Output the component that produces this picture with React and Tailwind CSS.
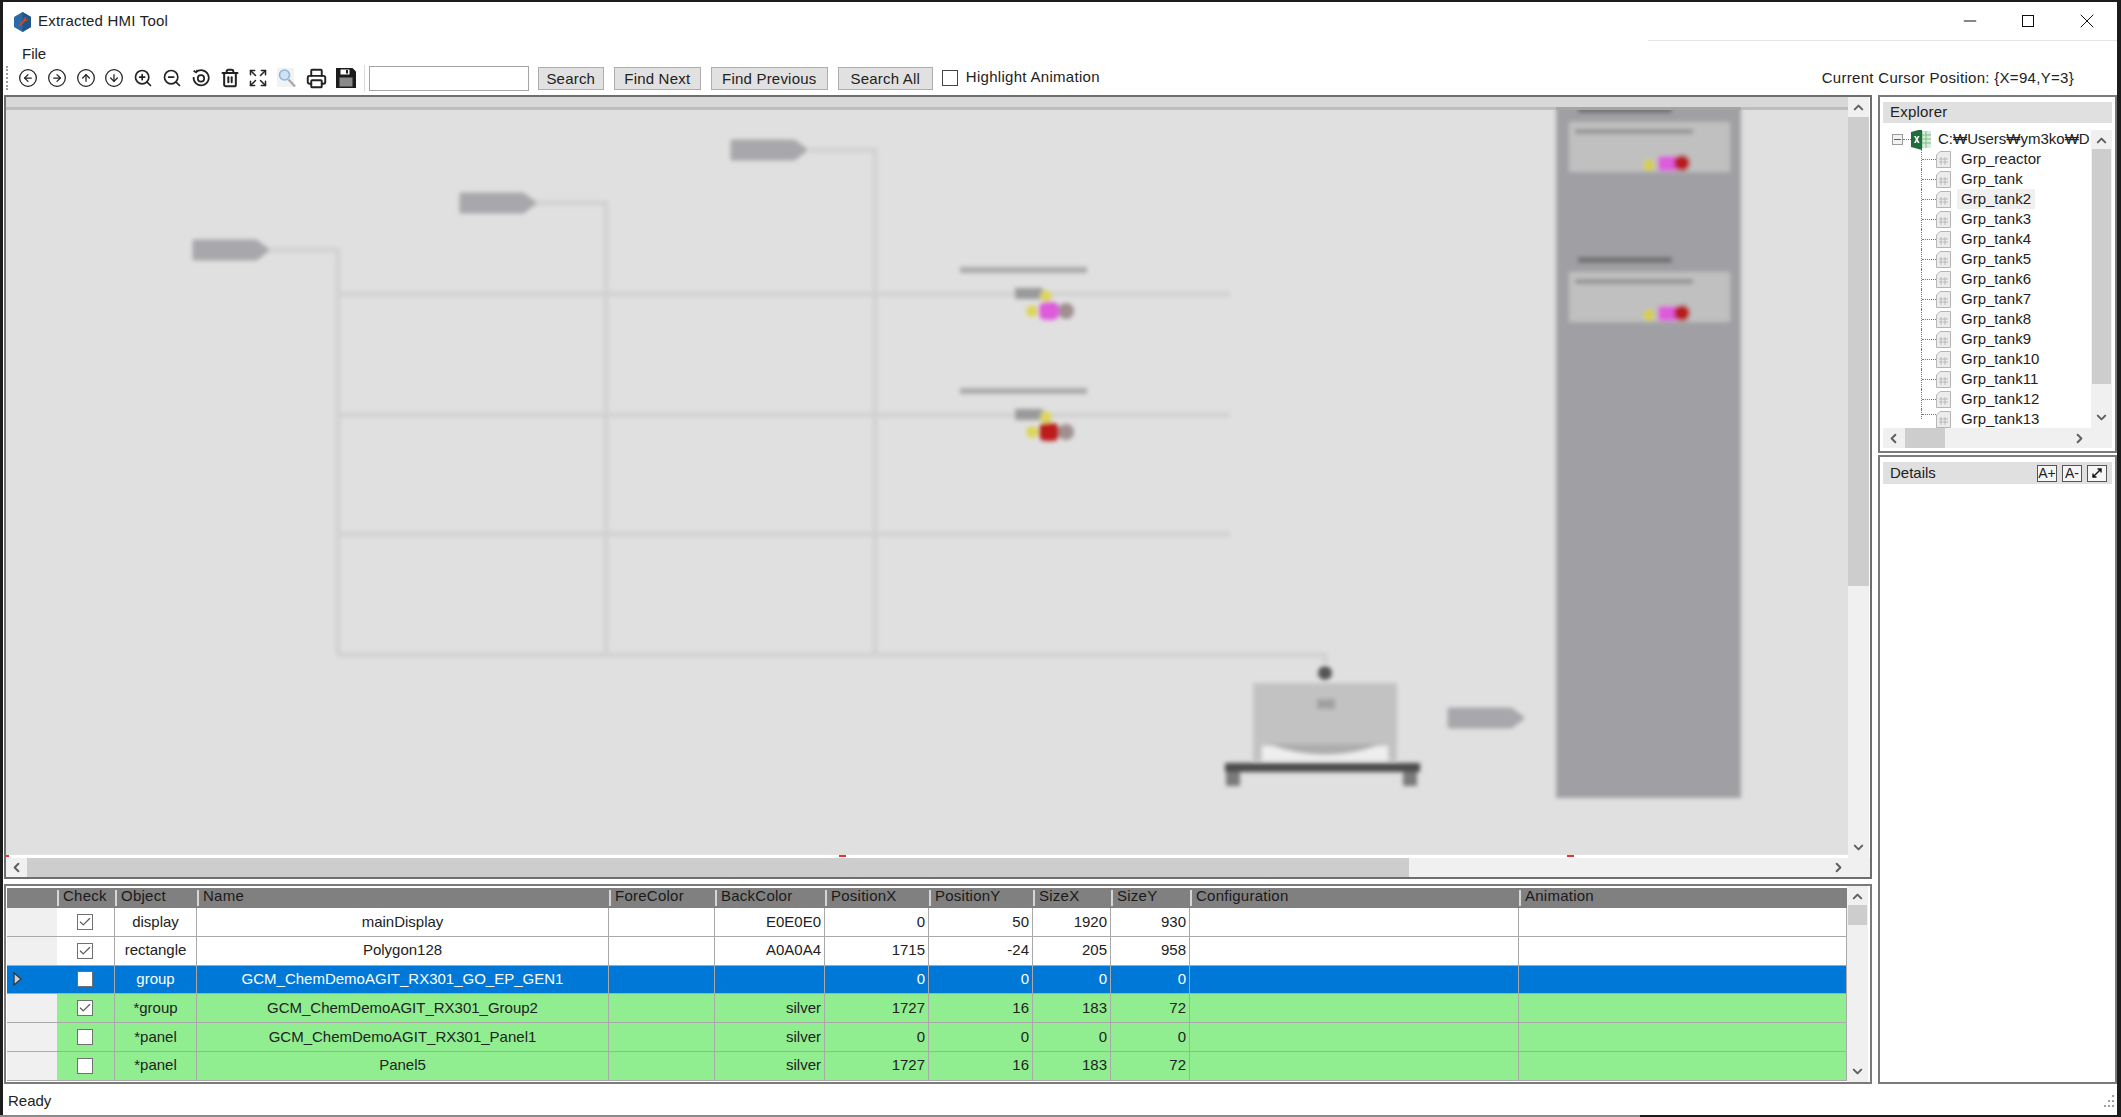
import {
  Check,
  ChevronDown,
  ChevronLeft,
  ChevronRight,
  ChevronUp,
  CircleArrowDown,
  CircleArrowLeft,
  CircleArrowRight,
  CircleArrowUp,
  Expand,
  Minus,
  Printer,
  Trash2,
  X,
  ZoomIn,
  ZoomOut,
} from "lucide-react"

const gridCols = "grid grid-cols-[50px_58px_82px_412px_106px_110px_104px_104px_78px_79px_329px_328px]"

const headers = ["Check", "Object", "Name", "ForeColor", "BackColor", "PositionX", "PositionY", "SizeX", "SizeY", "Configuration", "Animation"]

const rows = [
  { checked: true, object: "display", name: "mainDisplay", back: "E0E0E0", px: "0", py: "50", sx: "1920", sy: "930", tone: "white" },
  { checked: true, object: "rectangle", name: "Polygon128", back: "A0A0A4", px: "1715", py: "-24", sx: "205", sy: "958", tone: "white" },
  { checked: false, object: "group", name: "GCM_ChemDemoAGIT_RX301_GO_EP_GEN1", back: "", px: "0", py: "0", sx: "0", sy: "0", tone: "selected" },
  { checked: true, object: "*group", name: "GCM_ChemDemoAGIT_RX301_Group2", back: "silver", px: "1727", py: "16", sx: "183", sy: "72", tone: "green" },
  { checked: false, object: "*panel", name: "GCM_ChemDemoAGIT_RX301_Panel1", back: "silver", px: "0", py: "0", sx: "0", sy: "0", tone: "green" },
  { checked: false, object: "*panel", name: "Panel5", back: "silver", px: "1727", py: "16", sx: "183", sy: "72", tone: "green" },
]

const treeItems = ["Grp_reactor", "Grp_tank", "Grp_tank2", "Grp_tank3", "Grp_tank4", "Grp_tank5", "Grp_tank6", "Grp_tank7", "Grp_tank8", "Grp_tank9", "Grp_tank10", "Grp_tank11", "Grp_tank12", "Grp_tank13"]

function AppIcon() {
  return (
    <svg width="19" height="20" viewBox="0 0 19 20">
      <path d="M9.5 0 18 5v10l-8.5 5L1 15V5z" fill="#2a6aa6" />
      <path d="M9.5 0 18 5v10l-8.5 5z" fill="#1f5688" />
      <path d="M13 5c-1.6 0-2.6 1.2-2.4 2.8L5.5 13l1.4 1.4 5.2-5.1C13.7 9.5 15 8.4 15 6.8l-1.7 1-1-1 1.7-1z" fill="#d8402f" />
    </svg>
  )
}

function ResetIcon() {
  return (
    <svg width="20" height="20" viewBox="0 0 20 20" fill="none" stroke="#222" strokeWidth="1.7">
      <path d="M5 4.2A7.6 7.6 0 1 1 2.6 9" />
      <path d="M2.6 2.8 5 4.4 6.5 2" />
      <circle cx="10" cy="10.4" r="3.2" />
    </svg>
  )
}

function FadedSearchIcon() {
  return (
    <svg width="20" height="22" viewBox="0 0 20 22" fill="none">
      <rect x="0" y="1" width="17" height="19" fill="#f2f2f2" />
      <circle cx="7.5" cy="8" r="5" fill="#cfe3f5" stroke="#8cb8dc" strokeWidth="1.6" />
      <path d="M11.5 12.5 18 19.5" stroke="#a9a9a9" strokeWidth="2.4" />
    </svg>
  )
}

function SaveIcon() {
  return (
    <svg width="20" height="20" viewBox="0 0 20 20">
      <path d="M0 0h16.500L20 3.500V20H0z" fill="#1c1c1c" />
      <rect x="4.500" y="1.500" width="9" height="5" fill="#fff" />
      <rect x="10" y="2" width="2" height="3.500" fill="#1c1c1c" />
      <rect x="3.500" y="9.500" width="13" height="9" fill="#8a8a8a" />
    </svg>
  )
}

function ExcelIcon() {
  return (
    <svg width="21" height="21" viewBox="0 0 21 21" className="shrink-0">
      <rect x="8" y="2" width="12" height="17" fill="#d8ecd9" />
      <path d="M11 2v17M15 2v17M8 6h12M8 10h12M8 14h12" stroke="#7fbb8b" strokeWidth="1" />
      <path d="M0 3 11 0v21L0 18z" fill="#1e6e3c" />
      <path d="M3 7h1.800l1 2 1-2H8.600L6.700 10.500 8.600 14H6.800l-1-2-1 2H3l1.900-3.500z" fill="#fff" />
    </svg>
  )
}

function SheetIcon() {
  return (
    <svg width="15" height="17" viewBox="0 0 15 17" fill="none" className="shrink-0">
      <path d="M4 .5h10.500v16H.5V4z" fill="#ececec" stroke="#b5b5b5" />
      <path d="M5 6v8M9 6v8M3 8h9M3 11h9" stroke="#b0b0b0" strokeWidth=".8" />
    </svg>
  )
}

function Diagram() {
  const tags = [
    [192, 250],
    [459, 203],
    [730, 150],
    [1447, 718],
  ]
  const lines = [
    "M270 250H338V655",
    "M536 203H606V655",
    "M809 150H875V655",
    "M338 294H1230",
    "M338 415H1230",
    "M338 534H1230",
    "M338 655H1325V664",
  ]
  const gauges = [
    [293, "#de5bdc"],
    [414, "#bd1d1d"],
  ]
  const panels = [122, 272]

  return (
    <svg width="1842" height="761" viewBox="6 97 1842 761" className="block">
      <defs>
        <filter id="soft" x="-5%" y="-5%" width="110%" height="110%">
          <feGaussianBlur stdDeviation="2.3" />
        </filter>
      </defs>
      <rect x="6" y="97" width="1842" height="761" fill="#e0e0e0" />
      <g filter="url(#soft)">
        {lines.map((d) => (
          <path key={d} d={d} fill="none" stroke="#d2d2d2" strokeWidth="5" />
        ))}
        {tags.map(([x, y]) => (
          <path key={x} d={`M${x + 2} ${y - 9}h62l12 9-12 9h-62z`} fill="#a8a8ac" stroke="#a8a8ac" strokeWidth="3" strokeLinejoin="round" />
        ))}
        {gauges.map(([y, color]) => (
          <g key={y}>
            <rect x="960" y={y - 26} width="127" height="6" fill="#aaaaaa" />
            <rect x="1015" y={y - 5} width="28" height="11" fill="#9a9a9a" />
            <circle cx="1046" cy={y + 3} r="6" fill="#dcd65a" />
            <circle cx="1032" cy={y + 18} r="6" fill="#dcd65a" />
            <circle cx="1066" cy={y + 18} r="8" fill="#a08f8f" />
            <rect x="1039" y={y + 9} width="20" height="18" rx="6" fill={color} />
          </g>
        ))}
        <circle cx="1325" cy="673" r="7" fill="#555" />
        <rect x="1253" y="683" width="144" height="64" fill="#c2c2c2" />
        <rect x="1253" y="745" width="9" height="16" fill="#c2c2c2" />
        <rect x="1388" y="745" width="9" height="16" fill="#c2c2c2" />
        <path d="M1262 746H1388V760H1262z" fill="#eeeeee" />
        <path d="M1268 744Q1325 766 1382 744z" fill="#adadad" />
        <rect x="1317" y="699" width="18" height="10" fill="#a0a0a0" />
        <rect x="1225" y="763" width="195" height="9" fill="#4c4c4c" />
        <rect x="1226" y="772" width="14" height="14" fill="#7a7a7a" />
        <rect x="1403" y="772" width="14" height="14" fill="#7a7a7a" />
        <rect x="1556" y="104" width="185" height="694" fill="#a0a0a4" />
        <rect x="1578" y="107" width="94" height="6" fill="#6f6f71" />
        <rect x="1578" y="257" width="94" height="6" fill="#6f6f71" />
        {panels.map((y) => (
          <g key={y}>
            <rect x="1569" y={y} width="161" height="50" fill="#c0c0c0" />
            <rect x="1575" y={y + 7} width="118" height="5" fill="#959595" />
            <circle cx="1649" cy={y + 43} r="6" fill="#d6cf4e" />
            <rect x="1658" y={y + 34} width="20" height="15" rx="3" fill="#de5bdc" />
            <circle cx="1682" cy={y + 41} r="8" fill="#b81f1f" />
          </g>
        ))}
      </g>
      <rect x="6" y="97" width="1842" height="11" fill="#d8d8d8" />
      <rect x="6" y="107" width="1842" height="3" fill="#bdbdbd" />
      <rect x="1556" y="107" width="185" height="3" fill="#a5a5a5" />
      <rect x="6" y="855" width="1842" height="3" fill="#ffffff" />
      <rect x="6" y="855" width="3" height="2" fill="#f03030" />
      <rect x="839" y="855" width="7" height="2" fill="#f03030" />
      <rect x="1567" y="855" width="7" height="2" fill="#f03030" />
    </svg>
  )
}

function ToolButton({ width, children }) {
  return (
    <button className={`${width} h-[23px] shrink-0 border border-[#adadad] bg-[#e1e1e1] text-[15px] leading-none tracking-[0.2px] text-[#222]`}>
      {children}
    </button>
  )
}

function Toolbar() {
  return (
    <div className="flex h-[30px] items-center pb-[4px]">
      <div className="ml-[3px] h-[24px] w-[2px] border-l-2 border-dotted border-[#a0a0a0]" />
      <div className="ml-[10px] flex items-center gap-[8.800px] text-[#222]">
        <CircleArrowLeft size={20} strokeWidth={1.5} />
        <CircleArrowRight size={20} strokeWidth={1.5} />
        <CircleArrowUp size={20} strokeWidth={1.5} />
        <CircleArrowDown size={20} strokeWidth={1.5} />
        <ZoomIn size={20} strokeWidth={2} />
        <ZoomOut size={20} strokeWidth={2} />
        <ResetIcon />
        <Trash2 size={20} strokeWidth={2.400} />
        <Expand size={20} strokeWidth={1.8} />
        <FadedSearchIcon />
        <Printer size={21} strokeWidth={2.200} />
        <SaveIcon />
      </div>
      <div className="ml-[8px] h-[27px] w-px bg-[#dcdcdc]" />
      <div className="ml-[4px] h-[25px] w-[160px] border border-[#a5a5a5] bg-white" />
      <div className="ml-[9px] flex items-center gap-[10px]">
        <ToolButton width="w-[66px]">Search</ToolButton>
        <ToolButton width="w-[87px]">Find Next</ToolButton>
        <ToolButton width="w-[117px]">Find Previous</ToolButton>
        <ToolButton width="w-[95px]">Search All</ToolButton>
      </div>
      <div className="ml-[9px] h-[16px] w-[16px] border border-[#444] bg-white" />
      <span className="ml-[8px] -mt-[2px] text-[15px] tracking-[0.3px] text-[#222]">Highlight Animation</span>
      <span className="ml-auto pr-[43px] text-[15px] tracking-[0.3px] text-[#222]">Current Cursor Position: {"{X=94,Y=3}"}</span>
    </div>
  )
}

function VScroll({ thumb, track = "bg-[#f0f0f0]" }) {
  return (
    <div className={`flex w-[21px] shrink-0 flex-col items-center ${track}`}>
      <ChevronUp size={15} strokeWidth={3.200} className="mb-[1px] mt-[3px] shrink-0 text-[#606060]" />
      <div className="w-full flex-1">{thumb}</div>
      <ChevronDown size={15} strokeWidth={3.200} className="mb-[3px] mt-[1px] shrink-0 text-[#606060]" />
    </div>
  )
}

function CanvasPanel() {
  return (
    <div className="flex h-[784px] flex-col border-2 border-[#6e6e6e]">
      <div className="flex h-[761px]">
        <div className="h-[761px] w-[1842px]">
          <Diagram />
        </div>
        <VScroll thumb={<div className="mt-[1px] h-[469px] w-full bg-[#cdcdcd]" />} />
      </div>
      <div className="flex h-[19px] items-center bg-[#f0f0f0]">
        <ChevronLeft size={15} strokeWidth={3.200} className="ml-[3px] text-[#606060]" />
        <div className="ml-[3px] h-full w-[1382px] bg-[#cdcdcd]" />
        <ChevronRight size={15} strokeWidth={3.200} className="ml-auto mr-[24px] text-[#606060]" />
      </div>
    </div>
  )
}

function CheckBox({ checked }) {
  return (
    <div className="-ml-[2px] flex h-[16px] w-[16px] items-center justify-center border border-[#707070] bg-white">
      {checked && <Check size={14} strokeWidth={2} className="text-[#555]" />}
    </div>
  )
}

function Row({ row }) {
  const toneClass = {
    white: "bg-white text-[#222]",
    selected: "bg-[#0078d7] text-white",
    green: "bg-[#90ee90] text-[#222]",
  }[row.tone]
  const cell = "flex items-center border-r border-b border-[#a9a9a9]"
  const numbers = [row.back, row.px, row.py, row.sx, row.sy]

  return (
    <div className={`${gridCols} h-[28.750px] text-[15px] ${toneClass}`}>
      <div className={`flex items-center pl-[6px] ${row.tone === "selected" ? "border-b border-[#a9a9a9]" : "border-b border-[#a9a9a9] bg-[#f0f0f0]"}`}>
        {row.tone === "selected" && (
          <svg width="9" height="14" viewBox="0 0 9 14">
            <path d="M1 1 8 7 1 13z" fill="#c9d4df" stroke="#3a3a3a" strokeWidth="1.4" />
          </svg>
        )}
      </div>
      <div className={`${cell} justify-center`}>
        <CheckBox checked={row.checked} />
      </div>
      <div className={`${cell} justify-center`}>{row.object}</div>
      <div className={`${cell} justify-center`}>{row.name}</div>
      <div className={cell} />
      {numbers.map((value, i) => (
        <div key={i} className={`${cell} justify-end pr-[3px]`}>
          {value}
        </div>
      ))}
      <div className={cell} />
      <div className={cell} />
    </div>
  )
}

function DataGrid() {
  return (
    <div className="mt-[5px] flex h-[200px] border-2 border-[#7a7a7a] bg-white">
      <div className="w-[1841px] overflow-hidden pl-px pt-[2px]">
        <div className={`${gridCols} h-[20px] bg-[#808080] text-[15px] tracking-[0.25px] text-[#1a1a1a]`}>
          <div />
          {headers.map((title) => (
            <div key={title} className="flex items-center">
              <div className="h-[16px] w-[2px] bg-[#d6d6d6]" />
              <span className="-mt-[3px] ml-[4px]">{title}</span>
            </div>
          ))}
        </div>
        {rows.map((row) => (
          <Row key={row.name} row={row} />
        ))}
      </div>
      <VScroll thumb={<div className="mx-auto h-[20px] w-[19px] bg-[#cdcdcd]" />} />
    </div>
  )
}

function TreeRow({ label, highlighted, last }) {
  return (
    <div className="flex h-[20px] items-center">
      <div className={`flex w-[15px] shrink-0 items-center border-l border-dotted border-[#777] ${last ? "h-[10px] self-start" : "h-full"}`}>
        <div className="w-full border-b border-dotted border-[#777]" />
      </div>
      <SheetIcon />
      <span className={`ml-[6px] px-[4px] text-[15px] leading-[20px] text-[#222] ${highlighted ? "bg-[#f0f0f0]" : ""}`}>{label}</span>
    </div>
  )
}

function Explorer() {
  return (
    <div className="h-[358px] border-2 border-[#7a7a7a] bg-white px-[3px] pt-[5px]">
      <div className="flex h-[21px] items-center bg-[#e0e0e0] pl-[7px] text-[15px] tracking-[0.2px] text-[#222]">Explorer</div>
      <div className="mt-[7px] flex h-[298px]">
        <div className="w-[209px] overflow-hidden pl-[9px]">
          <div className="flex h-[19px] items-center">
            <div className="flex h-[11px] w-[11px] shrink-0 items-center justify-center border border-[#9a9a9a] bg-[#f2f2f2]">
              <div className="h-px w-[7px] bg-[#3f5fa8]" />
            </div>
            <div className="w-[8px] shrink-0 border-b border-dotted border-[#777]" />
            <ExcelIcon />
            <span className="ml-[6px] whitespace-nowrap text-[15px] text-[#222]">C:₩Users₩ym3ko₩D</span>
          </div>
          <div className="ml-[29px]">
            {treeItems.map((label, i) => (
              <TreeRow key={label} label={label} highlighted={label === "Grp_tank2"} last={i === treeItems.length - 1} />
            ))}
          </div>
        </div>
        <VScroll thumb={<div className="mx-auto h-[235px] w-[19px] bg-[#cdcdcd]" />} />
      </div>
      <div className="flex h-[20px] items-center bg-[#f0f0f0]">
        <ChevronLeft size={15} strokeWidth={3.200} className="ml-[3px] text-[#606060]" />
        <div className="ml-[4px] h-full w-[40px] bg-[#cdcdcd]" />
        <ChevronRight size={15} strokeWidth={3.200} className="ml-[127px] text-[#606060]" />
      </div>
    </div>
  )
}

function DetailButton({ children }) {
  return (
    <div className="flex h-[17px] w-[20px] items-center justify-center border border-[#555] bg-[#f5f5f5] text-[14px] leading-none text-[#222]">
      {children}
    </div>
  )
}

function Details() {
  return (
    <div className="mt-[2px] h-[629px] border-2 border-[#7a7a7a] bg-white px-[3px] pt-[5px]">
      <div className="flex h-[22px] items-center bg-[#e0e0e0] pl-[7px] pr-[5px] text-[15px] text-[#222]">
        Details
        <div className="ml-auto flex gap-[5px]">
          <DetailButton>A+</DetailButton>
          <DetailButton>A-</DetailButton>
          <DetailButton>
            <svg width="12" height="12" viewBox="0 0 12 12" fill="none" stroke="#111" strokeWidth="1.400">
              <path d="M2 10 10 2M6.500 2H10V5.500M2 6.500V10H5.500" />
            </svg>
          </DetailButton>
        </div>
      </div>
    </div>
  )
}

export default function App() {
  return (
    <div className="flex h-[1117px] w-[2121px] flex-col overflow-hidden bg-[#1c1c1c] pl-[3px] pr-[4px] pt-[2px] font-['Liberation_Sans','Noto_Sans_CJK_KR',sans-serif]">
      <div className="flex h-[1113px] flex-col bg-white">
        <div className="flex h-[39px] items-center">
          <div className="ml-[10px]">
            <AppIcon />
          </div>
          <span className="ml-[6px] text-[15px] tracking-[0.2px] text-[#222]">Extracted HMI Tool</span>
          <div className="ml-auto flex h-full w-[469px] items-center justify-end gap-[41.500px] border-b border-[#e5e5e5] pr-[18px] text-[#111]">
            <Minus size={20} strokeWidth={1.200} />
            <div className="h-[12px] w-[12px] border border-[#111]" />
            <X size={24} strokeWidth={1} />
          </div>
        </div>
        <div className="flex h-[24px] items-center pl-[19px] pt-[2px] text-[15px] text-[#222]">File</div>
        <Toolbar />
        <div className="flex h-[989px]">
          <div className="w-[1869px] pl-px">
            <CanvasPanel />
            <DataGrid />
          </div>
          <div className="ml-[6px] w-[239px]">
            <Explorer />
            <Details />
          </div>
        </div>
        <div className="flex h-[31px] items-center justify-between pl-[5px] pr-[2px] pt-[3px] text-[15px] text-[#222]">
          Ready
          <svg width="11" height="13" viewBox="0 0 11 13" fill="#a0a0a0">
            <rect x="8" y="0" width="2" height="2" />
            <rect x="8" y="5" width="2" height="2" />
            <rect x="4" y="5" width="2" height="2" />
            <rect x="8" y="10" width="2" height="2" />
            <rect x="4" y="10" width="2" height="2" />
            <rect x="0" y="10" width="2" height="2" />
          </svg>
        </div>
      </div>
      <div className="-ml-[3px] h-[2px] w-[1640px] bg-[#8a8a8a]" />
    </div>
  )
}
